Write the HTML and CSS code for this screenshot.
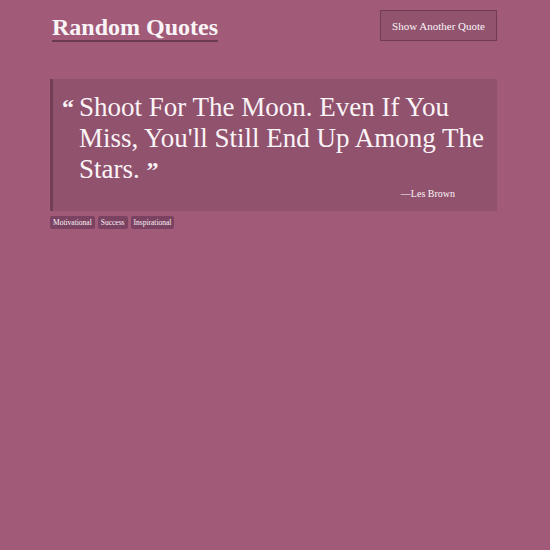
FILE: index.html
```html
<!DOCTYPE html>
<html>
<head>
<meta charset="utf-8">
<link rel="stylesheet" href="styles.css">
</head>
<body>
<div class="page">
  <header class="header">
    <h1 class="title">Random Quotes</h1>
    <button class="btn">Show Another Quote</button>
  </header>
  <blockquote class="quote">
    <div class="quote-row">
      <span class="mark">“</span>
      <p class="text">Shoot For The Moon. Even If You Miss, You'll Still End Up Among The Stars. <span class="mark close">”</span></p>
    </div>
    <div class="author">—Les Brown</div>
  </blockquote>
  <div class="tags">
    <span class="tag">Motivational</span>
    <span class="tag">Success</span>
    <span class="tag">Inspirational</span>
  </div>
</div>
</body>
</html>
```
FILE: styles.css
```css
html, body {
  margin: 0;
  padding: 0;
  background: #a15b79;
  height: 100%;
}
body {
  font-family: "Liberation Serif", "DejaVu Serif", serif;
  color: #fbf4f7;
}
.page {
  padding: 10px 53px 0 50px;
}
.header {
  display: flex;
  justify-content: space-between;
  align-items: flex-start;
  padding-left: 2px;
}
.title {
  margin: 4px 0 0 0;
  font-size: 24px;
  font-weight: bold;
  line-height: 26px;
  border-bottom: 2px solid #6b3a53;
}
.btn {
  font-family: inherit;
  font-size: 11px;
  color: #fbf4f7;
  background: #92536f;
  border: 1px solid #6f3b55;
  height: 31px;
  width: 117px;
  padding: 0;
}
.quote {
  margin: 37px 0 0 0;
  background: #91526e;
  border-left: 3px solid #743d58;
  padding: 13px 6px 11px 9px;
}
.quote-row {
  display: flex;
  align-items: flex-start;
}
.mark {
  font-size: 24px;
  font-weight: bold;
  line-height: 30px;
  width: 17px;
  flex: none;
}
.mark.close {
  display: inline;
  line-height: 1;
}
.text {
  margin: 0;
  font-size: 27px;
  line-height: 31px;
}
.author {
  text-align: right;
  font-size: 10px;
  line-height: 12px;
  margin-top: 3px;
  padding-right: 36px;
}
.tags {
  display: flex;
  gap: 3px;
  margin-top: 5px;
}
.tag {
  background: #7b4262;
  font-size: 7.5px;
  line-height: 9px;
  padding: 2px 3px;
  border-radius: 2px;
}
```
